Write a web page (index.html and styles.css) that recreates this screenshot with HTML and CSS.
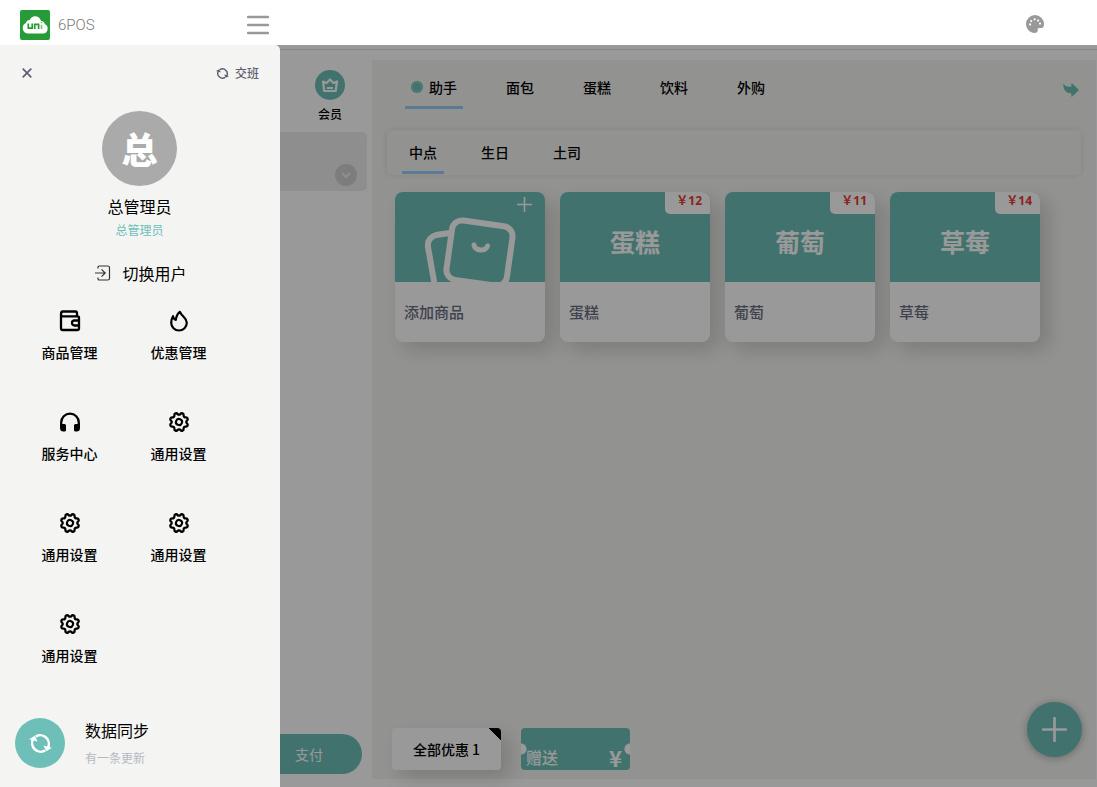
FILE: index.html
```html
<!DOCTYPE html>
<html lang="zh-CN">
<head>
<meta charset="utf-8">
<meta name="viewport" content="width=device-width, initial-scale=1">
<title>6POS</title>
<link rel="stylesheet" href="styles.css">
</head>
<body>
<svg class="defs" aria-hidden="true">
  <symbol id="gear" viewBox="0.500 0.500 23 23"><g fill="none" stroke="currentColor" stroke-width="2.200" transform="rotate(22.5 12 12)"><path d="M10.325 4.317c.426-1.756 2.924-1.756 3.35 0a1.724 1.724 0 002.573 1.066c1.543-.94 3.31.826 2.37 2.37a1.724 1.724 0 001.065 2.572c1.756.426 1.756 2.924 0 3.35a1.724 1.724 0 00-1.066 2.573c.94 1.543-.826 3.31-2.37 2.37a1.724 1.724 0 00-2.572 1.065c-.426 1.756-2.924 1.756-3.35 0a1.724 1.724 0 00-2.573-1.066c-1.543.94-3.31-.826-2.37-2.37a1.724 1.724 0 00-1.065-2.572c-1.756-.426-1.756-2.924 0-3.35a1.724 1.724 0 001.066-2.573c-.94-1.543.826-3.31 2.37-2.37.996.608 2.296.07 2.572-1.065z" transform="translate(12 12) scale(1.08) translate(-12 -12)"/><circle cx="12" cy="12" r="3.200"/></g></symbol>
  <symbol id="sync" viewBox="0 0 24 24"><g fill="none" stroke="currentColor" stroke-width="2.600"><path d="M7 4.800A9 9 0 0 1 19.500 17"/><path d="M17 19.200A9 9 0 0 1 4.500 7"/></g><path fill="currentColor" d="M0 7.500 6 4l3 6zM24 16.500 18 20l-3-6z"/></symbol>
  <symbol id="plus" viewBox="0 0 24 24"><path d="M12 1v22M1 12h22" fill="none" stroke="currentColor" stroke-width="2.600" stroke-linecap="round"/></symbol>
</svg>

<header class="topbar">
  <a class="brand" href="#">
    <svg class="logo" viewBox="0 0 30 30" aria-hidden="true">
      <rect width="30" height="30" rx="2" fill="#279b37"/>
      <path fill="#fff" d="M7.500 23.500a5.500 5.500 0 0 1-1.500-10.500c.3-2 2-3.200 3.800-3C10.800 7.600 12.800 6.300 15 6.300c3 0 5.300 2 6 4.600 2.300 0 3.700 1.400 3.800 3.100a5 5 0 0 1-1.800 9.500z"/>
      <path fill="none" stroke="#279b37" stroke-width="1.700" d="M8.300 13.500v4.700h3.900v-4.700M14.700 19v-4.700h3.900V19"/>
      <path fill="none" stroke="#6fbf7a" stroke-width="1.500" d="M21.500 14.700V19M21.500 12v1.300"/>
    </svg>
    <span>6POS</span>
  </a>
  <button class="bare burger" aria-label="菜单"><svg viewBox="0 0 22 20"><path d="M1 2h20M1 10h20M1 18h20" stroke="currentColor" stroke-width="2.400" stroke-linecap="round"/></svg></button>
  <button class="bare palette" aria-label="主题"><svg viewBox="0 0 18 18"><path fill="currentColor" fill-rule="evenodd" d="M9 0a9 9 0 0 0-9 9c0 5 4.500 9 8.500 9 2.300 0 3.300-1.200 3.200-2.800-.1-1.700.1-2.300 1.800-2.300h2c1.700 0 2.500-1.500 2.500-3.900A9 9 0 0 0 9 0zM4.100 8.300a1.100 1.100 0 1 1 0 2.200 1.100 1.100 0 0 1 0-2.200zM5.200 4.900a1.100 1.100 0 1 1 0 2.200 1.100 1.100 0 0 1 0-2.200zM8.600 3.200a1.100 1.100 0 1 1 0 2.200 1.100 1.100 0 0 1 0-2.200zM12.100 4.500a1.100 1.100 0 1 1 0 2.200 1.100 1.100 0 0 1 0-2.200zM14 7.500a1.100 1.100 0 1 1 0 2.200 1.100 1.100 0 0 1 0-2.200z"/></svg></button>
</header>

<div class="stage">
  <main class="app">
    <section class="order">
      <button class="bare member">
        <span class="member-icon"><svg viewBox="0 0 18 18"><path d="M2 5.500 5.500 7 9 3.500 12.500 7 16 5.500 14.700 15H3.300zM6 12h6" fill="none" stroke="#fff" stroke-width="2.200" stroke-linejoin="round"/></svg></span>
        <span>会员</span>
      </button>
      <div class="cart">
        <button class="bare expand" aria-label="展开"><svg viewBox="0 0 12 12"><path d="m2 4 4 4 4-4" fill="none" stroke="#ededed" stroke-width="2"/></svg></button>
      </div>
      <button class="bare pay">支付</button>
    </section>

    <section class="panel">
      <nav class="tabs">
        <a class="tab active" href="#"><svg class="dot" viewBox="0 0 12 12"><circle cx="6" cy="6" r="6" fill="#6dbfb8"/><circle cx="6" cy="6" r="4.500" fill="none" stroke="#a5d8d3" stroke-width=".7"/></svg>助手</a>
        <a class="tab" href="#">面包</a>
        <a class="tab" href="#">蛋糕</a>
        <a class="tab" href="#">饮料</a>
        <a class="tab" href="#">外购</a>
        <button class="bare next" aria-label="更多"><svg viewBox="0 0 16 14"><path fill="currentColor" d="M8.300.300Q9 .2 9.500.700L16 7l-6.500 6.300q-.6.500-1.200.2V10.300C3.500 10.500 0 7.500.300.600c1.700 2.900 4 3.500 8 3.200z"/></svg></button>
      </nav>
      <nav class="subtabs">
        <a class="subtab active" href="#">中点</a>
        <a class="subtab" href="#">生日</a>
        <a class="subtab" href="#">土司</a>
      </nav>
      <div class="goods">
        <article class="card">
          <div class="cover">
            <svg class="bags" viewBox="0 0 150 90"><g fill="none" stroke="#fff" stroke-width="6" stroke-linecap="round"><path d="M40 95 33 55Q32 46 41 43L55 41"/><rect x="54" y="31" width="61" height="60" rx="10" transform="rotate(8 84 61)"/><path d="M79 53c1 6 12 7 13.500 1" stroke-width="5"/></g></svg>
            <svg class="add"><use href="#plus"/></svg>
          </div>
          <h3>添加商品</h3>
        </article>
        <article class="card"><div class="cover">蛋糕<span class="price">&#65509;12</span></div><h3>蛋糕</h3></article>
        <article class="card"><div class="cover">葡萄<span class="price">&#65509;11</span></div><h3>葡萄</h3></article>
        <article class="card"><div class="cover">草莓<span class="price">&#65509;14</span></div><h3>草莓</h3></article>
      </div>
      <footer class="deals">
        <button class="bare all-deals">全部优惠 1</button>
        <button class="bare coupon"><span>赠送</span><b>¥</b></button>
        <button class="bare fab" aria-label="新增"><svg><use href="#plus"/></svg></button>
      </footer>
    </section>
  </main>

  <div class="mask"></div>

  <aside class="drawer">
    <div class="drawer-head">
      <button class="bare close" aria-label="关闭"><svg viewBox="0 0 10 10"><path d="m.7.700 8.600 8.600M9.300.700.7 9.300" stroke="currentColor" stroke-width="1.700"/></svg></button>
      <button class="bare shift"><svg><use href="#sync"/></svg>交班</button>
    </div>
    <div class="profile">
      <div class="avatar">总</div>
      <div class="name">总管理员</div>
      <div class="role">总管理员</div>
      <button class="bare switch"><svg viewBox="0 0 16 16"><path d="M3 3.500V2.300Q3 1 4.300 1h8.400Q14.500 1 14.500 2.500v11q0 1.500-1.800 1.500H4.300Q3 15 3 13.700v-1.200M0 8h10M6.500 4.300 10.200 8l-3.700 3.700" fill="none" stroke="#333" stroke-width="1.200"/></svg>切换用户</button>
    </div>
    <nav class="menu">
      <a href="#"><svg viewBox="0 0 22 22"><g fill="none" stroke="currentColor" stroke-width="2.300" stroke-linejoin="round"><path d="M2 3.500v14.700Q2 20 3.800 20h14.400q1.800 0 1.800-1.800V7.800Q20 6.300 18.200 6.300H3.500Q2 6.300 2 4t1.800-2.500h12.700Q18 1.500 18 3.500v2.800M20 10.500h-4.500a2.500 2.500 0 0 0 0 5H20"/></g></svg>商品管理</a>
      <a href="#"><svg viewBox="0 0 22 22"><path d="M11.800 1.800C9.300 3.800 8.300 6.500 7.800 9.800 6.200 9.500 5.200 8.200 5 6.200 3.700 8.500 3.200 10.800 3.200 12.700a7.800 7.800 0 0 0 15.600 0c0-2.700-1.500-4.200-3.200-5.900C14.300 5.500 12.900 4 11.800 1.800z" fill="none" stroke="currentColor" stroke-width="2.200" stroke-linejoin="round"/></svg>优惠管理</a>
      <a href="#"><svg viewBox="0 0 22 22"><path d="M2.200 17v-5.500a8.800 8.800 0 0 1 17.600 0V17" fill="none" stroke="currentColor" stroke-width="2.300"/><path d="M1 13h4.500q1.500 0 1.500 1.500V19q0 1.500-1.500 1.500H4.500Q1 20.500 1 17zM21 13h-4.500q-1.500 0-1.500 1.500V19q0 1.500 1.500 1.500h1q3.500 0 3.500-3.500z" fill="currentColor"/></svg>服务中心</a>
      <a href="#"><svg><use href="#gear"/></svg>通用设置</a>
      <a href="#"><svg><use href="#gear"/></svg>通用设置</a>
      <a href="#"><svg><use href="#gear"/></svg>通用设置</a>
      <a href="#"><svg><use href="#gear"/></svg>通用设置</a>
    </nav>
    <div class="sync">
      <button class="bare sync-button" aria-label="数据同步"><svg><use href="#sync"/></svg></button>
      <div>
        <div class="sync-title">数据同步</div>
        <div class="sync-note">有一条更新</div>
      </div>
    </div>
  </aside>
</div>
</body>
</html>
```
FILE: styles.css
```css
* { box-sizing: border-box; }

:root {
  --teal: #6dbfb8;
  --slate: #5c6070;
  --paper: #f4f4f2;
}

body {
  margin: 0;
  min-height: 100vh;
  display: flex;
  flex-direction: column;
  background: #fff;
  color: #000;
  font: 500 14px/20px "Noto Sans CJK SC", sans-serif;
}

a { color: inherit; text-decoration: none; }
svg { display: block; flex: none; }
.defs { position: absolute; width: 0; height: 0; }

.bare {
  border: 0;
  padding: 0;
  background: none;
  color: inherit;
  font: inherit;
  cursor: pointer;
}

/* Top bar */
.topbar {
  flex: none;
  height: 45px;
  display: flex;
  align-items: center;
  padding: 4px 53px 0 20px;
  color: #999;
}
.brand {
  width: 227px;
  display: flex;
  align-items: center;
  gap: 8px;
  font: 300 15px/20px Roboto, sans-serif;
  color: #777;
}
.logo { width: 30px; height: 30px; }
.burger svg { width: 22px; height: 20px; }
.palette { margin: 0 0 2px auto; }
.palette svg { width: 18px; height: 18px; }

/* Work area under the drawer */
.stage { flex: 1; position: relative; display: flex; }
.app {
  flex: 1;
  display: flex;
  gap: 5px;
  border-top: 4px solid #fff;
  padding: 0 1px 8px 0;
  box-shadow: inset 0 1px 0 #dcdde0;
}
.order { width: 367px; display: flex; flex-direction: column; }
.member {
  align-self: flex-end;
  margin: 21px 22px 8px 0;
  display: flex;
  flex-direction: column;
  align-items: center;
  gap: 4px;
  font-size: 12px;
}
.member-icon {
  width: 30px;
  height: 30px;
  display: grid;
  place-items: center;
  border-radius: 50%;
  background: var(--teal);
}
.member-icon svg { width: 18px; height: 18px; }
.cart {
  height: 59px;
  display: flex;
  justify-content: flex-end;
  align-items: flex-end;
  padding: 0 10px 5px;
  border-radius: 5px;
  background: #ededed;
}
.expand {
  width: 22px;
  height: 22px;
  display: grid;
  place-items: center;
  border-radius: 50%;
  background: #d0d0d0;
}
.expand svg { width: 12px; height: 12px; }
.pay {
  height: 40px;
  margin: auto 5px 5px 15px;
  padding-left: 280px;
  border-radius: 20px;
  background: var(--teal);
  color: #fff;
  font-weight: 400;
  text-align: left;
}

.panel {
  flex: 1;
  margin-top: 11px;
  display: flex;
  flex-direction: column;
  background: var(--paper);
}
.tabs { display: flex; gap: 37px; padding: 10px 17px 0 33px; }
.tab, .subtab {
  display: flex;
  align-items: center;
  height: 39px;
  border-bottom: 3px solid transparent;
}
.tab { gap: 6px; padding: 0 6px 2px; }
.dot { width: 12px; height: 12px; }
.active { border-image: linear-gradient(#98cbf8, #98cbf8) 1; }
.next { margin-left: auto; color: var(--teal); }
.next svg { width: 16px; height: 14px; }
.subtabs {
  display: flex;
  gap: 30px;
  margin: 21px 15px 0;
  padding: 5px 15px 1px;
  border-radius: 5px;
  box-shadow: 0 0 6px rgba(0, 0, 0, .1);
}
.subtab { padding: 0 7px 2px; }

.goods { display: flex; flex-wrap: wrap; gap: 15px; padding: 17px 23px; }
.card {
  width: 150px;
  height: 150px;
  overflow: hidden;
  border-radius: 8px;
  background: #fff;
  box-shadow: 8px 8px 20px rgba(0, 0, 0, .16);
}
.cover {
  position: relative;
  height: 90px;
  display: grid;
  place-items: center;
  padding-top: 8px;
  background: var(--teal);
  color: #fff;
  font-size: 25px;
  font-weight: 700;
}
.bags { position: absolute; inset: 0; }
.add { position: absolute; top: 5px; right: 13px; width: 15px; height: 15px; }
.price {
  position: absolute;
  top: 0;
  right: 0;
  padding: 0 8px 4px 11px;
  border-radius: 0 0 0 5px;
  background: #fff;
  color: #e93b30;
  font-family: "Open Sans", "Noto Sans CJK SC", sans-serif;
  font-size: 12px;
  line-height: 18px;
}
.card h3 {
  margin: 0;
  padding: 20px 9px;
  color: #696e80;
  font-size: 15px;
  font-weight: 500;
}

.deals { display: flex; align-items: flex-end; gap: 20px; margin-top: auto; padding: 0 14px 9px 20px; }
.all-deals, .coupon { width: 109px; height: 42px; border-radius: 4px; }
.all-deals {
  background: linear-gradient(45deg, transparent 50%, #000 50%) top right / 12px 12px no-repeat #fff;
  box-shadow: 8px 8px 20px rgba(0, 0, 0, .16);
}
.coupon {
  display: flex;
  align-items: flex-end;
  justify-content: space-between;
  padding: 0 8px 3px 5px;
  background:
    radial-gradient(circle at 0 50%, #fff 5px, transparent 6px),
    radial-gradient(circle at 100% 50%, #fff 5px, transparent 6px),
    var(--teal);
  color: #fff;
  font-size: 16px;
}
.coupon b { font-size: 22px; }
.fab {
  width: 55px;
  height: 55px;
  margin: 0 0 13px auto;
  display: grid;
  place-items: center;
  border-radius: 50%;
  background: var(--teal);
  color: #fff;
  box-shadow: 0 1px 8px rgba(0, 0, 0, .3);
}
.fab svg { width: 25px; height: 25px; }

.mask { position: absolute; inset: 0; background: rgba(0, 0, 0, .4); }

/* Drawer */
.drawer {
  position: absolute;
  inset: 0 auto 0 0;
  width: 280px;
  display: flex;
  flex-direction: column;
  padding: 18px 16px 19px 15px;
  border-radius: 0 5px 0 0;
  background: var(--paper);
}
.drawer-head {
  display: flex;
  justify-content: space-between;
  padding: 0 5px 0 7px;
  color: var(--slate);
  font-size: 12px;
}
.close svg { width: 10px; height: 10px; }
.shift { display: flex; align-items: center; gap: 6px; }
.shift svg { width: 13px; height: 13px; }
.profile { display: flex; flex-direction: column; align-items: center; padding-top: 28px; }
.avatar {
  width: 75px;
  height: 75px;
  display: grid;
  place-items: center;
  padding-bottom: 1px;
  border-radius: 50%;
  background: #aaa;
  color: #fff;
  font-size: 36px;
  font-weight: 900;
}
.name { margin-top: 10px; font-size: 16px; font-weight: 400; }
.role { margin-top: 4px; color: var(--teal); font-size: 12px; font-weight: 400; }
.switch {
  display: flex;
  align-items: center;
  gap: 11px;
  margin: 23px 0 0 3px;
  font-size: 16px;
  font-weight: 400;
}
.switch svg { width: 16px; height: 16px; }
.menu { display: grid; grid-template-columns: 109px 109px; row-gap: 49px; margin-top: 27px; }
.menu a {
  display: flex;
  flex-direction: column;
  align-items: center;
  gap: 10px;
}
.menu svg { width: 22px; height: 22px; }
.sync { display: flex; align-items: center; gap: 20px; margin-top: auto; }
.sync-button {
  width: 50px;
  height: 50px;
  display: grid;
  place-items: center;
  border-radius: 50%;
  background: var(--teal);
  color: #fff;
}
.sync-button svg { width: 23px; height: 23px; }
.sync-title { margin-top: 2px; font-size: 16px; font-weight: 400; }
.sync-note { margin-top: 8px; color: #b4b8c2; font-size: 12px; font-weight: 400; }
```
